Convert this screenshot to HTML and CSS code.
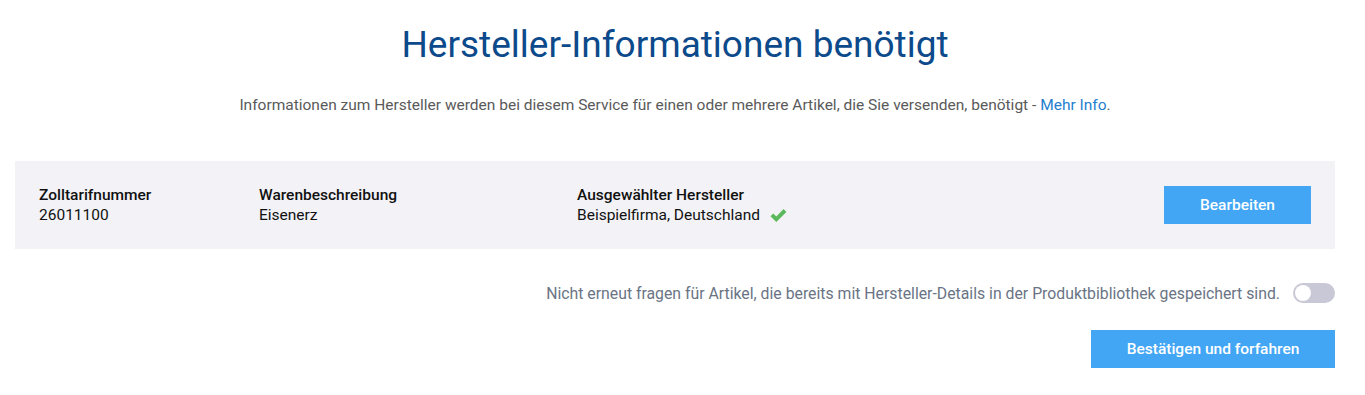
FILE: index.html
```html
<!DOCTYPE html>
<html>

<head>
	<link rel="stylesheet" href="styles.css">
</head>

<body>
	<div class="page">
		<h1 class="title">Hersteller-Informationen benötigt</h1>
		<p class="intro">Informationen zum Hersteller werden bei diesem Service für einen oder mehrere Artikel, die Sie versenden, benötigt - <a href="#" class="link">Mehr Info</a>.</p>

		<div class="item">
			<div class="field field-code">
				<div class="label">Zolltarifnummer</div>
				<div class="value">26011100</div>
			</div>
			<div class="field field-desc">
				<div class="label">Warenbeschreibung</div>
				<div class="value">Eisenerz</div>
			</div>
			<div class="field field-maker">
				<div class="label">Ausgewählter Hersteller</div>
				<div class="value">Beispielfirma, Deutschland
					<svg class="check" width="19" height="15" viewBox="0 0 19 15">
						<path d="M1.5 8.2 L4.3 5.4 L7.3 8.4 L14.6 1.1 L17.4 3.9 L7.3 14 Z" fill="#5cb85c" />
					</svg>
				</div>
			</div>
			<div class="actions">
				<button class="btn btn-edit">Bearbeiten</button>
			</div>
		</div>

		<div class="toggle-row">
			<span class="toggle-text">Nicht erneut fragen für Artikel, die bereits mit Hersteller-Details in der Produktbibliothek gespeichert sind.</span>
			<span class="toggle"><span class="knob"></span></span>
		</div>

		<div class="footer">
			<button class="btn btn-confirm">Bestätigen und forfahren</button>
		</div>
	</div>
</body>

</html>
```

FILE: styles.css
```css
body {
	margin: 0;
	font-family: Roboto, "Liberation Sans", sans-serif;
	background-color: #fff;
}

.page {
	padding: 0 30px 0 15px;
}

.title {
	margin: 0;
	padding-top: 21px;
	text-align: center;
	font-size: 37px;
	font-weight: 400;
	line-height: 48px;
	color: #0c4a8b;
}

.intro {
	margin: 26px 0 0;
	text-align: center;
	font-size: 15.5px;
	line-height: 20px;
	color: #5a5a5a;
}

.link {
	color: #1f7fcf;
	text-decoration: none;
}

.item {
	display: flex;
	align-items: center;
	margin-top: 46px;
	height: 88px;
	padding: 0 24px;
	background-color: #f3f3f7;
}

.field {
	font-size: 15.5px;
	line-height: 20px;
	color: #111;
}

.field-code {
	width: 220px;
}

.field-desc {
	width: 318px;
}

.label {
	font-weight: 500;
}

.value {
	display: flex;
	align-items: center;
}

.check {
	margin-left: 9px;
}

.actions {
	margin-left: auto;
}

.btn {
	border: none;
	background-color: #42a6f5;
	color: #fff;
	font-family: Roboto, "Liberation Sans", sans-serif;
	font-size: 15.5px;
	font-weight: 500;
	height: 38px;
	cursor: pointer;
}

.btn-edit {
	width: 147px;
}

.btn-confirm {
	width: 244px;
}

.toggle-row {
	display: flex;
	justify-content: flex-end;
	align-items: center;
	margin-top: 33px;
	height: 22px;
}

.toggle-text {
	font-size: 15.8px;
	color: #6a7485;
	margin-right: 13px;
}

.toggle {
	display: flex;
	align-items: center;
	width: 42px;
	height: 20px;
	border-radius: 10px;
	background-color: #c8c8d6;
}

.knob {
	width: 16px;
	height: 16px;
	margin-left: 2px;
	border-radius: 50%;
	background-color: #fff;
}

.footer {
	display: flex;
	justify-content: flex-end;
	margin-top: 26px;
}
```
